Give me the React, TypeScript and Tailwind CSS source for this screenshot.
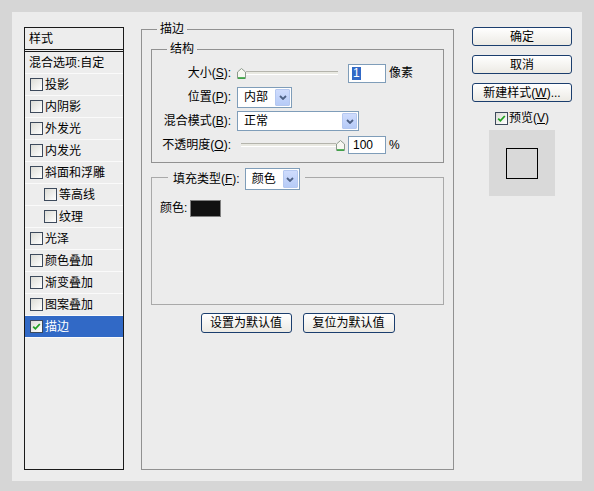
import React from "react";

const font = "font-['Liberation_Sans','Noto_Sans_CJK_SC',sans-serif]";

function Check({ checked = false }: { checked?: boolean }) {
    return (
        <span className="w-[13px] h-[13px] shrink-0 border border-[#3d4a5c] bg-gradient-to-br from-[#dcdcd6] to-white flex items-center justify-center">
            {checked && (
                <svg width="9" height="9" viewBox="0 0 9 9">
                    <path d="M1.2 4.6 L3.4 6.8 L7.8 2" fill="none" stroke="#21a121" strokeWidth="1.8" />
                </svg>
            )}
        </span>
    );
}

function Chevron() {
    return (
        <svg width="8" height="5" viewBox="0 0 8 5">
            <path d="M1 1 L4 4 L7 1" fill="none" stroke="#4d6185" strokeWidth="1.8" />
        </svg>
    );
}

function Select({ text, className }: { text: string; className: string }) {
    return (
        <div className={`flex items-center border border-[#7f9db9] bg-white ${className}`}>
            <span className="flex-1 pl-[6px] leading-none">{text}</span>
            <span className="mr-[1px] w-[15px] h-[calc(100%-2px)] rounded-[1px] border border-[#b5c8f0] bg-gradient-to-b from-[#cfdcfd] to-[#b6cbf7] flex items-center justify-center">
                <Chevron />
            </span>
        </div>
    );
}

function Thumb() {
    return (
        <svg width="9" height="11" viewBox="0 0 9 11" className="shrink-0">
            <path d="M4.5 0.5 L8.5 4 L8.5 10.5 L0.5 10.5 L0.5 4 Z" fill="#f7f7f2" stroke="#8d9a8d" />
            <path d="M1 10 L8 10" stroke="#2fa33a" strokeWidth="1.6" />
        </svg>
    );
}

function Track() {
    return <span className="flex-1 h-[4px] border-t border-[#b4b4ac] border-b border-b-white bg-[#e9e9e2]" />;
}

function Btn({ children, className }: { children: React.ReactNode; className: string }) {
    return (
        <div className={`flex items-center justify-center rounded-[3px] border border-[#1b3e6e] bg-gradient-to-b from-white to-[#eceae4] leading-none ${className}`}>
            {children}
        </div>
    );
}

const styles = [
    { name: "投影" },
    { name: "内阴影" },
    { name: "外发光" },
    { name: "内发光" },
    { name: "斜面和浮雕" },
    { name: "等高线", indent: true },
    { name: "纹理", indent: true },
    { name: "光泽" },
    { name: "颜色叠加" },
    { name: "渐变叠加" },
    { name: "图案叠加" },
    { name: "描边", selected: true },
];

export default function App() {
    return (
        <div className={`w-[594px] h-[491px] bg-[#d6d6d6] pt-[12px] pl-[12px] text-[12px] text-black ${font}`}>
            <div className="w-[570px] h-[469px] bg-[#ececec] flex items-start pl-[12px] pt-[15px]">
                {/* Styles list */}
                <div className="w-[100px] h-[443px] border border-[#1a1a1a] bg-[#ededed] flex flex-col">
                    <div className="h-[24px] pl-[4px] flex items-center border-b-[3px] border-double border-[#1a1a1a]">样式</div>
                    <div className="h-[22px] pl-[4px] flex items-center border-b border-[#fafafa]">混合选项:自定</div>
                    {styles.map((s) => (
                        <div
                            key={s.name}
                            className={`h-[22px] flex items-center gap-[2px] border-b border-[#fafafa] ${s.indent ? "pl-[19px]" : "pl-[5px]"} ${s.selected ? "bg-[#3169c6] text-white border-[#3169c6]" : ""}`}
                        >
                            <Check checked={s.selected} />
                            <span>{s.name}</span>
                        </div>
                    ))}
                </div>

                {/* Stroke group */}
                <div className="relative ml-[17px] mt-[2px] w-[313px] h-[441px] border border-[#919191] flex flex-col">
                    <span className="absolute left-[15px] -top-[9px] px-[3px] leading-[16px] bg-[#ececec]">描边</span>

                    {/* Structure */}
                    <div className="relative ml-[9px] mt-[19px] w-[293px] h-[114px] border border-[#919191] pt-[11px]">
                        <span className="absolute left-[15px] -top-[9px] px-[3px] leading-[16px] bg-[#ececec]">结构</span>

                        <div className="h-[24px] flex items-center">
                            <span className="w-[79px] text-right">大小(<u>S</u>):</span>
                            <div className="ml-[6px] w-[101px] flex items-center">
                                <Thumb />
                                <Track />
                            </div>
                            <div className="ml-[10px] w-[38px] h-[19px] border border-[#7f9db9] bg-white flex items-center pl-[3px]">
                                <span className="bg-[#3169c6] text-white leading-[13px] px-[1px]">1</span>
                            </div>
                            <span className="ml-[3px]">像素</span>
                        </div>

                        <div className="h-[24px] flex items-center">
                            <span className="w-[79px] text-right">位置(<u>P</u>):</span>
                            <Select text="内部" className="ml-[6px] w-[55px] h-[21px]" />
                        </div>

                        <div className="h-[24px] flex items-center">
                            <span className="w-[79px] text-right">混合模式(<u>B</u>):</span>
                            <Select text="正常" className="ml-[6px] w-[122px] h-[20px]" />
                        </div>

                        <div className="h-[24px] flex items-center">
                            <span className="w-[79px] text-right">不透明度(<u>O</u>):</span>
                            <div className="ml-[6px] w-[108px] pl-[4px] flex items-center">
                                <Track />
                                <Thumb />
                            </div>
                            <div className="ml-[3px] w-[38px] h-[18px] border border-[#7f9db9] bg-white flex items-center pl-[4px]">100</div>
                            <span className="ml-[3px]">%</span>
                        </div>
                    </div>

                    {/* Fill type */}
                    <div className="relative ml-[9px] mt-[14px] w-[293px] h-[128px] border border-[#a9a9a9] pt-[21px] pl-[8px]">
                        <div className="absolute left-[16px] -top-[10px] h-[22px] px-[5px] flex items-center gap-[5px] bg-[#ececec]">
                            <span>填充类型(<u>F</u>):</span>
                            <Select text="颜色" className="w-[55px] h-[22px]" />
                        </div>
                        <div className="flex items-center gap-[3px]">
                            <span>颜色:</span>
                            <span className="w-[31px] h-[17px] bg-[#111111] border border-[#808080]" />
                        </div>
                    </div>

                    <div className="mt-[8px] flex justify-center gap-[11px]">
                        <Btn className="w-[91px] h-[20px]">设置为默认值</Btn>
                        <Btn className="w-[92px] h-[20px]">复位为默认值</Btn>
                    </div>
                </div>

                {/* Right column */}
                <div className="ml-[18px] w-[100px] flex flex-col items-center">
                    <Btn className="w-[100px] h-[19px]">确定</Btn>
                    <Btn className="mt-[9px] w-[100px] h-[19px]">取消</Btn>
                    <Btn className="mt-[9px] w-[100px] h-[19px]">新建样式(<u>W</u>)...</Btn>
                    <div className="mt-[7px] flex items-center gap-[1px]">
                        <Check checked />
                        <span>预览(<u>V</u>)</span>
                    </div>
                    <div className="mt-[3px] w-[66px] h-[66px] bg-[#d9d9d9] flex items-center justify-center">
                        <div className="w-[32px] h-[31px] border border-black" />
                    </div>
                </div>
            </div>
        </div>
    );
}
